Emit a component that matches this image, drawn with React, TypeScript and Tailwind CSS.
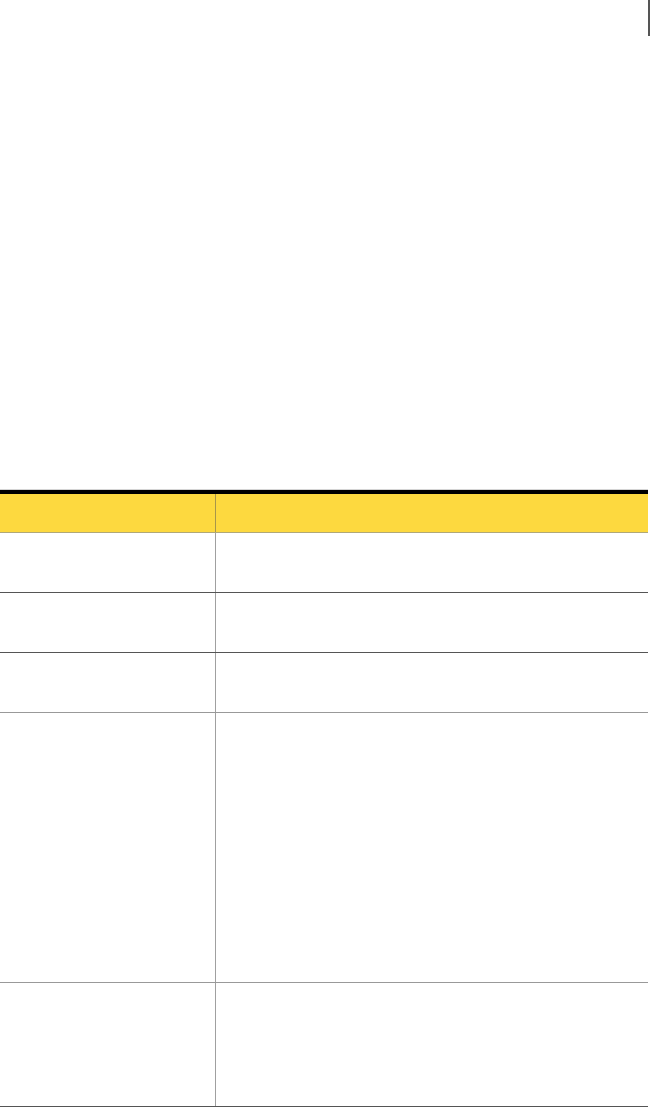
import React from "react";

const rows: { h: string; border: string }[] = [
  { h: "h-[60px]", border: "border-[#555555]" },
  { h: "h-[60px]", border: "border-[#555555]" },
  { h: "h-[60px]", border: "border-[#999999]" },
  { h: "h-[270px]", border: "border-[#999999]" },
  { h: "h-[124px]", border: "border-[#555555]" },
];

export default function App() {
  return (
    <div className="relative w-[651px] h-[1108px] bg-white overflow-hidden" style={{ fontFamily: '"Liberation Sans", Arial, sans-serif' }}>
      <div className="absolute right-[1px] top-0 w-[2px] h-[36px] bg-[#555555]" />
      <div className="pt-[489px] w-[648px]">
        <div className="border-t border-[#d4d4d4]">
          <div className="h-[4px] bg-black" />
          <div className="flex h-[39px] bg-[#fdd93f] border-b border-[#b0a878]">
            <div className="w-[216px] border-r border-[#a8964a]" />
            <div className="flex-1" />
          </div>
          {rows.map((r, i) => (
            <div key={i} className={`flex ${r.h} border-b ${r.border}`}>
              <div className="w-[216px] border-r border-[#a0a0a0]" />
              <div className="flex-1" />
            </div>
          ))}
        </div>
      </div>
    </div>
  );
}
